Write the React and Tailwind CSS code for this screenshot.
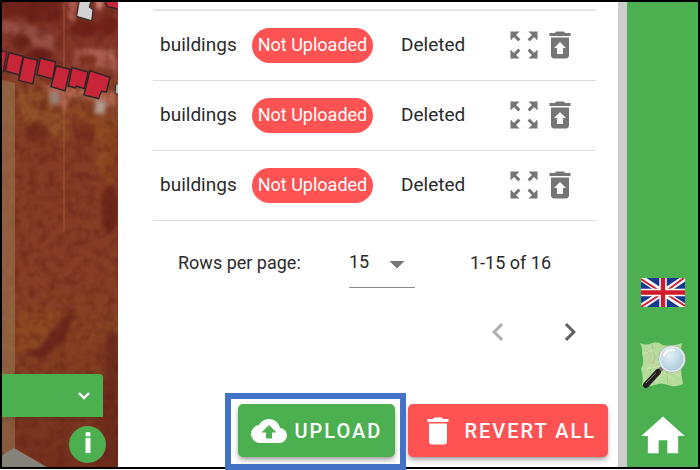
import React from "react";

const rows = [
  { id: 1, layer: "buildings", status: "Not Uploaded", action: "Deleted" },
  { id: 2, layer: "buildings", status: "Not Uploaded", action: "Deleted" },
  { id: 3, layer: "buildings", status: "Not Uploaded", action: "Deleted" },
];

function Icon({ d, className }) {
  return (
    <svg viewBox="0 0 24 24" fill="currentColor" aria-hidden="true" className={className}>
      <path d={d} />
    </svg>
  );
}

const paths = {
  expand:
    "M15 3l2.3 2.3-2.89 2.87 1.42 1.42L18.7 6.7 21 9V3zM3 9l2.3-2.3 2.87 2.89 1.42-1.42L6.7 5.3 9 3H3zm6 12l-2.3-2.3 2.89-2.87-1.42-1.42L5.3 17.3 3 15v6zm12-6l-2.3 2.3-2.87-2.89-1.42 1.42 2.89 2.87L15 21h6z",
  restore:
    "M14 14H16L12 10L8 14H10V18H14V14M6 7H18V19C18 20.1 17.1 21 16 21H8C6.89 21 6 20.1 6 19V7M19 4V6H5V4H8.5L9.5 3H14.5L15.5 4H19Z",
  trash: "M19 4H15.5L14.5 3H9.5L8.5 4H5V6H19M6 19A2 2 0 0 0 8 21H16A2 2 0 0 0 18 19V7H6V19Z",
  cloud:
    "M14 13v4h-4v-4H7l5-5 5 5m2.35-2.97C18.67 6.59 15.64 4 12 4 9.11 4 6.6 5.64 5.35 8.04 2.34 8.36 0 10.9 0 14a6 6 0 0 0 6 6h13a5 5 0 0 0 5-5c0-2.64-2.05-4.78-4.65-4.97z",
  caret: "M7 10l5 5 5-5z",
  left: "M15.41 16.58L10.83 12L15.41 7.41L14 6L8 12L14 18L15.41 16.58Z",
  right: "M8.59 16.58L13.17 12L8.59 7.41L10 6L16 12L10 18L8.59 16.58Z",
  home: "M10 20V14H14V20H19V12H22L12 3L2 12H5V20H10Z",
};

function AerialMap() {
  return (
    <svg
      viewBox="6 6 348 1395"
      preserveAspectRatio="xMinYMin slice"
      role="img"
      aria-label="Aerial map"
      className="absolute inset-0 h-full w-full"
    >
      <defs>
        <linearGradient id="ground" x1="0" y1="0" x2="0" y2="1">
          <stop offset="0" stopColor="#7f3124" />
          <stop offset="0.13" stopColor="#84382a" />
          <stop offset="0.2" stopColor="#8a4626" />
          <stop offset="0.32" stopColor="#853b24" />
          <stop offset="0.6" stopColor="#883d26" />
          <stop offset="0.7" stopColor="#884323" />
          <stop offset="1" stopColor="#75301e" />
        </linearGradient>
        <filter id="canopy" x="0" y="0" width="100%" height="100%" colorInterpolationFilters="sRGB">
          <feTurbulence type="fractalNoise" baseFrequency="0.035" numOctaves="2" seed="4" />
          <feColorMatrix values="0 0 0 0 0.37  0 0 0 0 0.11  0 0 0 0 0.07  2.4 0 0 0 -0.95" />
        </filter>
        <filter id="soft" x="-20%" y="-20%" width="140%" height="140%" colorInterpolationFilters="sRGB">
          <feGaussianBlur stdDeviation="6" />
        </filter>
      </defs>
      <rect x="6" y="6" width="348" height="1395" fill="url(#ground)" />
      <g filter="url(#soft)">
        <path d="M6 60L90 75L165 110L160 150L90 135L6 95Z" fill="#964f45" />
        <path d="M230 145L350 150L350 225L310 200L220 195Z" fill="#ac5f50" />
        <path d="M205 -10H230L222 65L208 60Z" fill="#c46f61" />
        <path d="M285 -10H312L305 28H290Z" fill="#d5877a" />
        <path d="M130 255L360 275L350 320L215 290L195 335Z" fill="#b0654f" />
        <path d="M50 260L150 280L200 350L210 420L70 400Z" fill="#905028" />
        <path d="M205 320L345 345L340 560L290 520L270 380Z" fill="#8e4923" />
        <path d="M6 -10H180V65L100 70L50 40L6 55Z" fill="#6f231a" />
        <ellipse cx="62" cy="125" rx="27" ry="27" fill="#6e271b" />
        <ellipse cx="120" cy="165" rx="38" ry="16" fill="#691f18" />
        <ellipse cx="255" cy="85" rx="42" ry="25" fill="#6e2018" />
        <ellipse cx="325" cy="75" rx="28" ry="28" fill="#742219" />
        <ellipse cx="262" cy="180" rx="28" ry="17" fill="#833622" />
        <ellipse cx="128" cy="315" rx="13" ry="17" fill="#77381f" />
        <ellipse cx="110" cy="395" rx="38" ry="28" fill="#732e1d" />
        <ellipse cx="250" cy="400" rx="34" ry="30" fill="#7a321f" />
        <ellipse cx="330" cy="630" rx="26" ry="75" fill="#6e2819" />
        <path d="M60 940L185 930L175 1010L120 1060L48 1050Z" fill="#8c4822" />
        <path d="M190 950L225 935L195 1020L130 1075L60 1065L120 1040Z" fill="#6c281c" />
        <path d="M320 1000H354V1400H300Z" fill="#6e2c1c" />
      </g>
      <rect x="6" y="6" width="348" height="1395" filter="url(#canopy)" opacity="0.42" />
      <path d="M6 240L45 250V1360H6Z" fill="#9c835a" opacity="0.5" />
      <path d="M192 6V695" stroke="#b76b3a" strokeWidth="4" opacity="0.45" />
      <path d="M6 1365L42 1344L140 1401H6Z" fill="#85827a" />
      <g filter="url(#soft)">
        <path d="M150 272L180 280L173 315L148 308Z" fill="#97827a" />
        <path d="M288 298L320 305L312 345L283 338Z" fill="#b09a92" />
      </g>
      <path d="M239 -4H274L268 22L279 29L275 62L230 49Z" fill="#d2d2d2" stroke="#262626" strokeWidth="3" />
      <path d="M315 6L323 20L356 27V0H312Z" fill="#c5253b" stroke="#262626" strokeWidth="4" />
      <path d="M347 253L358 250V285L345 279Z" fill="#a9b5b0" stroke="#262626" strokeWidth="3" />
      <g fill="#c82539" stroke="#262626" strokeWidth="4">
        <path d="M0 150L20 157L10 216L0 212Z" />
        <path d="M27 158L69 169L58 225L16 213Z" />
        <path d="M71 171L113 180L98 252L56 241Z" />
        <path d="M121 174L167 186L158 237L111 224Z" />
        <path d="M169 198L210 208L195 273L153 260Z" />
        <path d="M216 203L264 216L253 266L229 258L226 264L205 258Z" />
        <path d="M270 212L330 232L319 276L304 274L296 296L252 285Z" />
      </g>
    </svg>
  );
}

function UnionJack() {
  return (
    <svg viewBox="0 0 44 29" role="img" aria-label="English" className="h-[29px] w-[44px]">
      <rect width="44" height="29" fill="#17398f" />
      <path d="M0 0L44 29M44 0L0 29" stroke="#fff" strokeWidth="6" />
      <path d="M0 1L20 14M24 14L43 0M0 29L20 16M25 16L44 28" stroke="#cf2038" strokeWidth="2" />
      <path d="M22 0V29M0 14.5H44" stroke="#fff" strokeWidth="7.4" />
      <path d="M22 0V29M0 14.5H44" stroke="#cf1b2c" strokeWidth="4.4" />
    </svg>
  );
}

function MapLogo() {
  return (
    <svg viewBox="0 0 46 48" role="img" aria-label="OpenStreetMap" className="h-[48px] w-[46px]">
      <defs>
        <radialGradient id="lens" cx="0.4" cy="0.35" r="0.7">
          <stop offset="0" stopColor="#e6f0f6" />
          <stop offset="0.6" stopColor="#c0d9e5" />
          <stop offset="1" stopColor="#a3c4d4" />
        </radialGradient>
      </defs>
      <path
        d="M0 1Q7 4 12 1Q17 -1 23 3Q30 5 42 1Q40 8 42 16Q40 28 43 42Q35 46 28 43Q21 40 15 43Q8 45 2 43Q4 34 1 27Q5 20 2 12Q3 6 0 1Z"
        fill="#b5dc9b"
      />
      <path d="M12 1L15 16L10 29L15 43M28 4L26 23L28 43" stroke="#9fca8b" fill="none" />
      <path d="M3 12L13 8L21 17L7 27L20 24L40 34M15 40L24 31L34 38" stroke="#d3e3ae" fill="none" />
      <path d="M4 7L11 12L9 19L17 22" stroke="#d3bba5" fill="none" />
      <path d="M23 25L18 30" stroke="#777" strokeWidth="4" />
      <path d="M18 30L6 43" stroke="#25201f" strokeWidth="6" strokeLinecap="round" />
      <path d="M16 31L6 41" stroke="#817878" strokeWidth="1" />
      <circle cx="32" cy="17" r="12.5" fill="url(#lens)" stroke="#e7efef" strokeWidth="2" />
      <circle cx="32" cy="17" r="13.5" fill="none" stroke="#93a39f" strokeWidth="0.6" />
      <path d="M24 13Q27 7 34 8" stroke="#fff" strokeWidth="2" fill="none" strokeLinecap="round" />
    </svg>
  );
}

function MapPane() {
  return (
    <section className="relative w-[116px] shrink-0 overflow-hidden">
      <AerialMap />
      <div className="absolute bottom-1 left-0 flex w-full flex-col items-end gap-[9px] pr-3">
        <button
          type="button"
          aria-label="Open layer list"
          className="mr-[3px] flex h-[43px] w-[101px] items-center justify-end rounded-tr-[4px] bg-[#4caf50] pr-3 text-white shadow-md"
        >
          <svg viewBox="0 0 14 8" className="h-2 w-[14px]" fill="none" stroke="currentColor" strokeWidth="2.4" aria-hidden="true">
            <path d="M2 1L7 6L12 1" />
          </svg>
        </button>
        <button
          type="button"
          aria-label="Information"
          className="flex size-[37px] items-center justify-center rounded-full bg-[#4caf50] text-white"
        >
          <svg viewBox="0 0 8 22" className="mb-1 h-[22px] w-2" fill="currentColor" aria-hidden="true">
            <rect x="1.5" y="0" width="5" height="4.5" rx="1.5" />
            <rect x="1.5" y="6" width="5" height="15" />
          </svg>
        </button>
      </div>
    </section>
  );
}

function ChangesTable() {
  return (
    <table className="w-full border-t-2 border-[#e3e3e3] text-[19px] leading-6 text-[#2a2a2a]">
      <tbody>
        {rows.map((row) => (
          <tr key={row.id} className="h-[70px] border-b border-[#dcdcdc]">
            <td className="w-[99px] pl-[7px]">{row.layer}</td>
            <td className="w-[149px]">
              <span className="inline-flex h-[35px] w-[121px] items-center justify-center rounded-full bg-[#ff5252] text-[18px] text-white">
                {row.status}
              </span>
            </td>
            <td>{row.action}</td>
            <td className="w-[90px]">
              <div className="flex text-[#757575]">
                <button type="button" aria-label="Zoom to feature">
                  <Icon d={paths.expand} className="size-[36px]" />
                </button>
                <button type="button" aria-label="Restore feature">
                  <Icon d={paths.restore} className="size-[36px]" />
                </button>
              </div>
            </td>
          </tr>
        ))}
      </tbody>
    </table>
  );
}

function Pagination() {
  return (
    <div className="pt-[17px] text-[18px] leading-6 text-[#2a2a2a]">
      <div className="flex h-[50px] items-center pl-[25px]">
        <label htmlFor="page-size" className="w-[171px]">
          Rows per page:
        </label>
        <div className="relative h-full w-[66px] shrink-0 border-b border-[#8a8a8a]">
          <select id="page-size" defaultValue="15" className="h-full w-full appearance-none bg-transparent outline-none">
            <option>5</option>
            <option>15</option>
            <option>25</option>
          </select>
          <Icon d={paths.caret} className="pointer-events-none absolute top-2 right-0 size-[36px] text-[#757575]" />
        </div>
        <span className="pl-[55px] whitespace-nowrap">1-15 of 16</span>
      </div>
      <div className="flex justify-end gap-9 pt-[26px] pr-2 text-[#616161]">
        <button type="button" disabled aria-label="Previous page" className="opacity-50">
          <Icon d={paths.left} className="size-[36px]" />
        </button>
        <button type="button" aria-label="Next page">
          <Icon d={paths.right} className="size-[36px]" />
        </button>
      </div>
    </div>
  );
}

function Actions() {
  return (
    <div className="mt-auto flex justify-end gap-[13px] pr-[10px] pb-[10px] text-[20px] font-medium tracking-[2px] text-white">
      <div className="relative">
        <button
          type="button"
          className="flex h-[53px] items-center gap-2 rounded-[5px] bg-[#4caf50] px-[13px] shadow-md shadow-black/30"
        >
          <Icon d={paths.cloud} className="size-[36px]" />
          UPLOAD
        </button>
        <span className="pointer-events-none absolute -top-[11px] -right-[11px] -bottom-[13px] -left-[13px] border-[6px] border-[#4472c4]" />
      </div>
      <button
        type="button"
        className="flex h-[53px] items-center gap-2 rounded-[5px] bg-[#ff5252] px-3 shadow-md shadow-black/30"
      >
        <Icon d={paths.trash} className="size-[36px]" />
        REVERT ALL
      </button>
    </div>
  );
}

export default function App() {
  return (
    <div className="h-screen bg-white pb-px font-['Roboto','Liberation_Sans',sans-serif]">
      <main className="flex h-full border-2 border-black">
        <MapPane />
        <section className="flex min-w-0 flex-1 flex-col bg-white">
          <div className="pt-[7px] pr-[22px] pl-[35px]">
            <ChangesTable />
            <Pagination />
          </div>
          <Actions />
        </section>
        <div className="w-[9px] shrink-0 bg-[#cdcdcd]" />
        <nav className="flex w-[71px] shrink-0 flex-col items-center justify-end bg-[#4caf50] pb-[5px]">
          <button type="button" className="mb-[35px]">
            <UnionJack />
          </button>
          <a href="#map" className="mb-5">
            <MapLogo />
          </a>
          <a href="#home" aria-label="Home" className="text-white">
            <Icon d={paths.home} className="size-[52px]" />
          </a>
        </nav>
      </main>
    </div>
  );
}
